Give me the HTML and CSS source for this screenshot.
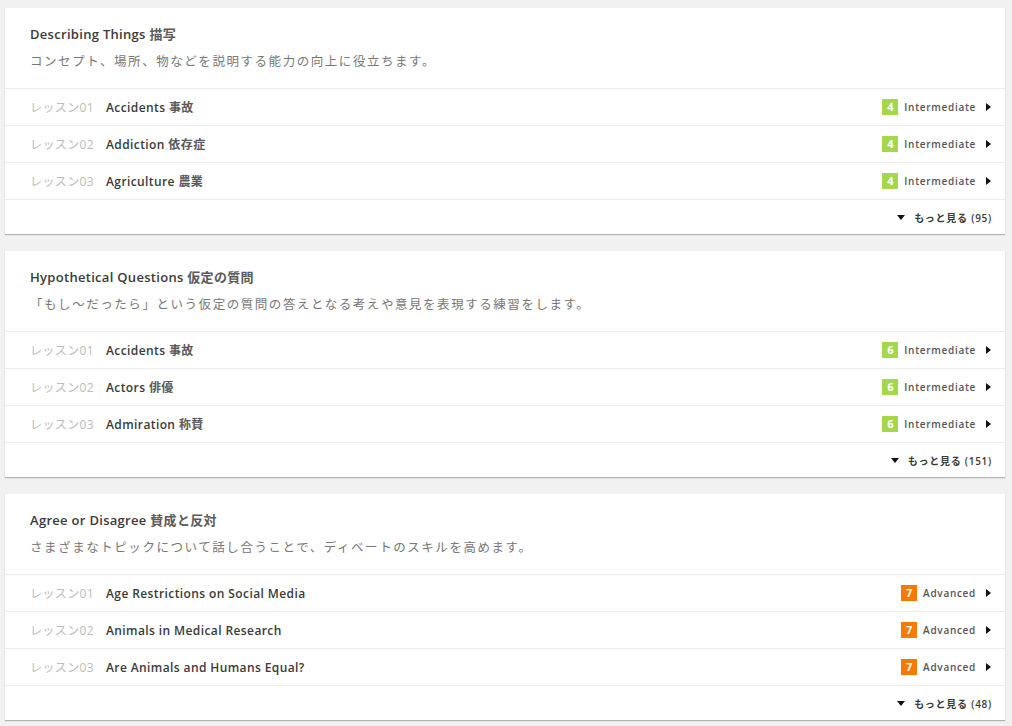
FILE: index.html
```html
<!DOCTYPE html>
<html lang="ja">
<head>
    <meta charset="UTF-8">
    <meta name="viewport" content="width=device-width, initial-scale=1.0">
    <title>トピック一覧</title>
    <link rel="stylesheet" href="styles.css">
</head>
<body>
    <div class="page">
        <div class="topic-card">
            <div class="topic-head">
                <h2 class="topic-title">Describing Things <span class="ja">描写</span></h2>
                <p class="topic-desc">コンセプト、場所、物などを説明する能力の向上に役立ちます。</p>
            </div>
            <div class="lesson">
                <span class="lesson-no">レッスン01</span>
                <span class="lesson-name">Accidents <span class="ja">事故</span></span>
                <span class="level"><span class="badge green">4</span>Intermediate<span class="arrow"></span></span>
            </div>
            <div class="lesson">
                <span class="lesson-no">レッスン02</span>
                <span class="lesson-name">Addiction <span class="ja">依存症</span></span>
                <span class="level"><span class="badge green">4</span>Intermediate<span class="arrow"></span></span>
            </div>
            <div class="lesson">
                <span class="lesson-no">レッスン03</span>
                <span class="lesson-name">Agriculture <span class="ja">農業</span></span>
                <span class="level"><span class="badge green">4</span>Intermediate<span class="arrow"></span></span>
            </div>
            <div class="more"><span class="down"></span>もっと見る (95)</div>
        </div>

        <div class="topic-card">
            <div class="topic-head">
                <h2 class="topic-title">Hypothetical Questions <span class="ja">仮定の質問</span></h2>
                <p class="topic-desc">「もし～だったら」という仮定の質問の答えとなる考えや意見を表現する練習をします。</p>
            </div>
            <div class="lesson">
                <span class="lesson-no">レッスン01</span>
                <span class="lesson-name">Accidents <span class="ja">事故</span></span>
                <span class="level"><span class="badge green">6</span>Intermediate<span class="arrow"></span></span>
            </div>
            <div class="lesson">
                <span class="lesson-no">レッスン02</span>
                <span class="lesson-name">Actors <span class="ja">俳優</span></span>
                <span class="level"><span class="badge green">6</span>Intermediate<span class="arrow"></span></span>
            </div>
            <div class="lesson">
                <span class="lesson-no">レッスン03</span>
                <span class="lesson-name">Admiration <span class="ja">称賛</span></span>
                <span class="level"><span class="badge green">6</span>Intermediate<span class="arrow"></span></span>
            </div>
            <div class="more"><span class="down"></span>もっと見る (151)</div>
        </div>

        <div class="topic-card">
            <div class="topic-head">
                <h2 class="topic-title">Agree or Disagree <span class="ja">賛成と反対</span></h2>
                <p class="topic-desc">さまざまなトピックについて話し合うことで、ディベートのスキルを高めます。</p>
            </div>
            <div class="lesson">
                <span class="lesson-no">レッスン01</span>
                <span class="lesson-name">Age Restrictions on Social Media</span>
                <span class="level"><span class="badge orange">7</span>Advanced<span class="arrow"></span></span>
            </div>
            <div class="lesson">
                <span class="lesson-no">レッスン02</span>
                <span class="lesson-name">Animals in Medical Research</span>
                <span class="level"><span class="badge orange">7</span>Advanced<span class="arrow"></span></span>
            </div>
            <div class="lesson">
                <span class="lesson-no">レッスン03</span>
                <span class="lesson-name">Are Animals and Humans Equal?</span>
                <span class="level"><span class="badge orange">7</span>Advanced<span class="arrow"></span></span>
            </div>
            <div class="more"><span class="down"></span>もっと見る (48)</div>
        </div>
    </div>
</body>
</html>
```

FILE: styles.css
```css
body {
    margin: 0;
    background: #f1f1f1;
    font-family: "Open Sans", "Noto Sans CJK JP", sans-serif;
    color: #333;
}
.page {
    padding: 8px 7px 0 5px;
}
.topic-card {
    background: #fff;
    box-shadow: 0 1px 1px rgba(0,0,0,0.25);
    margin-bottom: 17px;
}
.topic-head {
    padding: 17px 25px 16px;
}
.topic-title {
    margin: 0;
    font-size: 13px;
    font-weight: 600;
    line-height: 18px;
    letter-spacing: 0.3px;
    color: #3a3a3a;
}
.ja {
    color: #5a5a5a;
}
.topic-desc {
    margin: 9px 0 0;
    font-size: 12.5px;
    line-height: 20px;
    letter-spacing: 1.55px;
    color: #777;
}
.lesson {
    display: flex;
    align-items: center;
    height: 36px;
    border-top: 1px solid #ececec;
    padding: 0 14px 0 25px;
}
.lesson-no {
    width: 76px;
    font-size: 12px;
    color: #bbb;
    letter-spacing: 0.4px;
}
.lesson-name {
    flex: 1;
    font-size: 12px;
    font-weight: 600;
    letter-spacing: 0.4px;
    color: #3a3a3a;
}
.level {
    display: flex;
    align-items: center;
    font-size: 10px;
    font-weight: 600;
    letter-spacing: 0.7px;
    color: #555;
}
.badge {
    display: inline-block;
    width: 16px;
    height: 16px;
    line-height: 16px;
    margin-right: 6px;
    text-align: center;
    font-size: 11px;
    font-weight: 700;
    letter-spacing: 0;
    color: #fff;
}
.badge.green { background: #a4d74b; }
.badge.orange { background: #f77a05; }
.arrow {
    width: 0;
    height: 0;
    margin-left: 10px;
    border-top: 4px solid transparent;
    border-bottom: 4px solid transparent;
    border-left: 5px solid #111;
}
.more {
    display: flex;
    align-items: center;
    justify-content: flex-end;
    height: 34px;
    border-top: 1px solid #ececec;
    padding-right: 13px;
    font-size: 10px;
    font-weight: 600;
    letter-spacing: 0.75px;
    color: #3a3a3a;
}
.down {
    width: 0;
    height: 0;
    margin-right: 9px;
    border-left: 4px solid transparent;
    border-right: 4px solid transparent;
    border-top: 5px solid #111;
}
```
